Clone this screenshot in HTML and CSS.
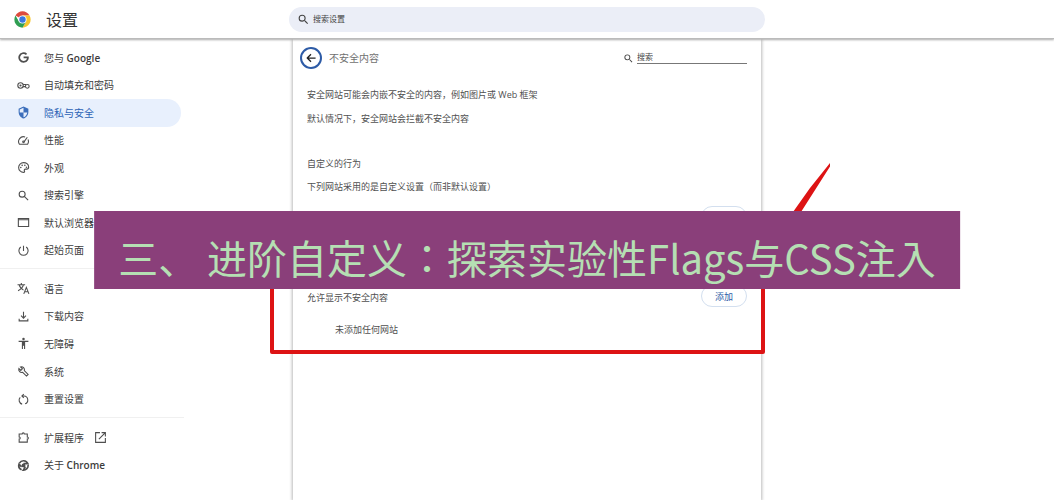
FILE: index.html
```html
<!DOCTYPE html>
<html lang="zh-CN">
<head>
<meta charset="utf-8">
<title>设置</title>
<link rel="stylesheet" href="styles.css">
</head>
<body>
<div class="page">
  <header class="topbar">
    <div class="brand">
      <svg class="logo" viewBox="0 0 48 48" aria-hidden="true">
        <path fill="#dd4b3e" d="M24 24 4.1 12.5A23 23 0 0 1 43.9 12.5H24z"/>
        <path fill="#f6c52c" d="M43.9 12.5A23 23 0 0 1 24 47L34 29.8 24 12.5z"/>
        <path fill="#2f9e52" d="M24 47A23 23 0 0 1 4.1 12.5L14 29.8 34 29.8z"/>
        <circle cx="24" cy="24" r="11.5" fill="#fff"/>
        <circle cx="24" cy="24" r="9" fill="#3b78e0"/>
      </svg>
      <h1 class="brand-title">设置</h1>
    </div>
    <label class="search">
      <svg class="icon-search" viewBox="0 0 24 24" aria-hidden="true"><path d="M15.5 14h-.79l-.28-.27A6.47 6.47 0 0 0 16 9.500 6.500 6.500 0 1 0 9.500 16c1.610 0 3.090-.59 4.230-1.570l.27.28v.79l5 4.990L20.490 19zm-6 0a4.500 4.500 0 1 1 0-9 4.500 4.500 0 0 1 0 9z"/></svg>
      <input class="search-input" type="text" placeholder="搜索设置" aria-label="搜索设置">
    </label>
  </header>

  <div class="body">
    <nav class="sidebar">
      <ul class="menu menu-main">
        <li><a class="item" href="#"><svg class="icon" viewBox="0 0 24 24"><path d="M21.500 10.300H12.200v3h6.100c-.5 3.300-3 5-6.100 5a6.400 6.400 0 1 1 4.300-11.100l2.200-2.200A9.600 9.600 0 1 0 12.200 21.600c4.900 0 9.500-3.500 9.500-9.600 0-.6-.1-1.200-.2-1.700z"/></svg>您与 <span class="latin">Google</span></a></li>
        <li><a class="item" href="#"><svg class="icon line" viewBox="0 0 24 24"><circle cx="6.500" cy="12" r="5"/><circle cx="6.500" cy="12" r="1"/><path d="M11 10h6M11 14h4"/><circle cx="19" cy="13.500" r="3.500"/></svg>自动填充和密码</a></li>
        <li><a class="item active" href="#" aria-current="page"><svg class="icon" viewBox="0 0 24 24"><path d="M12 1 3 5v6c0 5.550 3.840 10.740 9 12 5.160-1.260 9-6.450 9-12V5zm0 11h7c-.53 4.120-3.280 7.790-7 8.940V12H5V6.300l7-3.110z"/></svg>隐私与安全</a></li>
        <li><a class="item" href="#"><svg class="icon line" viewBox="0 0 24 24"><path d="M15 5.500A9 9 0 0 0 4.500 19h15a9 9 0 0 0 .8-9"/><path d="m19 6-6 8.500"/><circle cx="12" cy="14.500" r="1.500"/></svg>性能</a></li>
        <li><a class="item" href="#"><svg class="icon line" viewBox="0 0 24 24"><path d="M12 3a9 9 0 0 0 0 18c2 0 2.500-1.500 1.700-2.700-.9-1.500 0-3.300 1.800-3.300H18c2 0 3.500-1.500 3.500-4C21.500 6 17 3 12 3z"/><g class="dots"><circle cx="7" cy="12" r="1.500"/><circle cx="9.500" cy="8" r="1.500"/><circle cx="14.500" cy="8" r="1.500"/><circle cx="17.500" cy="11.500" r="1.500"/></g></svg>外观</a></li>
        <li><a class="item" href="#"><svg class="icon line" viewBox="0 0 24 24"><circle cx="9.500" cy="9.500" r="5.500"/><path d="m13.500 13.500 7 7"/></svg>搜索引擎</a></li>
        <li><a class="item" href="#"><svg class="icon line" viewBox="0 0 24 24"><path d="M2.500 4.500h19v15h-19zM2.500 7h19"/></svg>默认浏览器</a></li>
        <li><a class="item" href="#"><svg class="icon line" viewBox="0 0 24 24"><path d="M12 3v10M7 5.500a8.500 8.500 0 1 0 10 0"/></svg>起始页面</a></li>
      </ul>
      <ul class="menu menu-advanced">
        <li><a class="item" href="#"><svg class="icon line" viewBox="0 0 24 24"><path d="M1 5h14M8 2v3M4 5c1 5 4.500 8 8 10M12 5C11 10 6 14 2 16M12.500 22l4.800-12 4.700 12M14.300 18h6"/></svg>语言</a></li>
        <li><a class="item" href="#"><svg class="icon line" viewBox="0 0 24 24"><path d="M12 3v12M7.500 10.500 12 15l4.500-4.500M4 16v4h16v-4"/></svg>下载内容</a></li>
        <li><a class="item" href="#"><svg class="icon" viewBox="0 0 24 24"><circle cx="12" cy="3.500" r="2.300"/><path d="M21 9h-6v13h-2v-6h-2v6H9V9H3V7h18z"/></svg>无障碍</a></li>
        <li><a class="item" href="#"><svg class="icon line" viewBox="0 0 24 24"><path d="M6.500 3.500 10 7l-3 3-3.500-3.500A5.500 5.500 0 0 0 10.500 13.500l7 7 3-3-7-7a5.500 5.500 0 0 0-7-7z"/></svg>系统</a></li>
        <li><a class="item" href="#"><svg class="icon line" viewBox="0 0 24 24"><path d="M9.500 5.500H13a7.500 7.500 0 0 1 2 14.500M9.500 20.500A7.500 7.500 0 0 1 6 8M12.500 2 9 5.500 12.500 9"/></svg>重置设置</a></li>
      </ul>
      <ul class="menu menu-more">
        <li><a class="item" href="#"><svg class="icon line" viewBox="0 0 24 24"><path d="M4 5.500h5.500a2 2 0 0 1 4 0H19V11a2 2 0 0 1 0 4v5.500H4V15a2 2 0 0 0 0-4z"/></svg>扩展程序<svg class="icon line external" viewBox="0 0 24 24"><path d="M11 3H3v18h18v-8M14 3h7v7M21 3 9 15"/></svg></a></li>
        <li><a class="item" href="#"><svg class="icon line" viewBox="0 0 24 24"><circle cx="12" cy="12" r="3.500" class="dots"/><path class="thick" d="M4.500 7.500A8.700 8.700 0 0 1 20 8.500h-8M20.500 11A8.700 8.700 0 0 1 11.500 20.600l4-6.600M8.500 20A8.700 8.700 0 0 1 3.700 9.500l4.800 5"/></svg>关于 <span class="latin">Chrome</span></a></li>
      </ul>
    </nav>

    <main class="panel">
      <div class="panel-head">
        <button class="back" type="button" aria-label="返回"><svg viewBox="0 0 24 24"><path d="M23 12H3M12 3l-9 9 9 9"/></svg></button>
        <h2 class="panel-title">不安全内容</h2>
        <label class="find">
          <svg class="icon-search" viewBox="0 0 24 24" aria-hidden="true"><path d="M15.500 14h-.79l-.28-.27A6.470 6.470 0 0 0 16 9.500 6.500 6.500 0 1 0 9.500 16c1.610 0 3.090-.59 4.230-1.570l.27.28v.79l5 4.990L20.490 19zm-6 0a4.500 4.500 0 1 1 0-9 4.500 4.500 0 0 1 0 9z"/></svg>
          <input class="find-input" type="text" placeholder="搜索" aria-label="搜索">
        </label>
      </div>
      <div class="intro">
        <p>安全网站可能会内嵌不安全的内容，例如图片或 Web 框架</p>
        <p>默认情况下，安全网站会拦截不安全内容</p>
      </div>
      <div class="custom">
        <h3>自定义的行为</h3>
        <p>下列网站采用的是自定义设置（而非默认设置）</p>
      </div>
      <section class="sites">
        <div class="sites-head"><button class="add" type="button">添加</button></div>
      </section>
      <section class="sites">
        <div class="sites-head"><span class="sites-title">允许显示不安全内容</span><button class="add" type="button">添加</button></div>
        <p class="empty">未添加任何网站</p>
      </section>
      <div class="mark"></div>
      <svg class="pointer" viewBox="0 0 60 80" aria-hidden="true"><path d="M60 2 61 4 31 51 10 80H2L23 51 40 27z"/></svg>
    </main>
  </div>

  <div class="banner" lang="ja">三、 进阶自定义：探索实验性Flags与CSS注入</div>
</div>
</body>
</html>
```
FILE: styles.css
```css
* { box-sizing: border-box; }

body {
  margin: 0;
  background: #fff;
  color: #505050;
  font-family: "Open Sans", "Noto Sans CJK SC", sans-serif;
  font-size: 9px;
}

h1, h2, h3, p, ul { margin: 0; padding: 0; font-weight: 400; font-size: inherit; }
ul { list-style: none; }
button, input { font: inherit; }

.page {
  position: relative;
  min-height: 100vh;
  display: flex;
  flex-direction: column;
  overflow: hidden;
}

/* Top bar */
.topbar {
  position: relative;
  z-index: 1;
  height: 39px;
  display: grid;
  grid-template-columns: 1fr minmax(0, 476px) 1fr;
  align-items: center;
  background: #fff;
  border-bottom: 1px solid #bbb;
  box-shadow: 0 1px 2px #aaa;
}
.brand { display: flex; align-items: center; gap: 15px; padding-left: 14px; }
.logo { width: 17px; height: 17px; }
.brand-title { padding-top: 2px; font-size: 16px; line-height: 24px; color: #333; }
.search {
  height: 25px;
  display: flex;
  align-items: center;
  gap: 3px;
  padding: 0 8px;
  border-radius: 13px;
  background: #ebeef7;
}
.icon-search { width: 13px; height: 13px; fill: #444; flex: none; }
.search-input, .find-input {
  min-width: 0;
  flex: 1;
  border: 0;
  padding: 0;
  background: none;
  outline: 0;
  font-size: 8px;
  line-height: 12px;
}
input::placeholder { color: #444; opacity: 1; }

.body {
  flex: 1;
  display: grid;
  grid-template-columns: 1fr minmax(0, 468px) 1fr;
}

/* Sidebar */
.sidebar { width: 184px; padding-top: 5px; }
.menu { display: grid; grid-auto-rows: 1fr; }
.menu + .menu { margin-top: 4px; padding-top: 6px; border-top: 1px solid #f0f0f0; }
.menu-main { height: 220px; }
.menu-advanced { height: 145px; }
.menu-more { height: 62px; }
.item {
  height: 100%;
  margin-right: 3px;
  display: flex;
  align-items: center;
  padding-left: 17px;
  border-radius: 0 14px 14px 0;
  color: #3c3c3c;
  font-size: 10px;
  line-height: 16px;
  text-decoration: none;
  white-space: pre;
}
.latin { font-weight: 600; }
.active { background: #e8f0fd; color: #2b62b5; }
.icon { width: 13px; height: 13px; margin-right: 14px; fill: currentColor; flex: none; opacity: 0.9; }
.line { fill: none; stroke: currentColor; stroke-width: 2; }
.dots { fill: currentColor; stroke: none; }
.thick { stroke-width: 3; }
.external { margin: 0 0 0 10px; }

/* Content panel */
.panel {
  position: relative;
  padding: 1px 14px 0 14px;
  box-shadow: 0 0 3px 1px #bbb;
}
.panel-head { height: 36px; display: flex; align-items: center; margin: 0 0 7px -7px; }
.back {
  width: 22px;
  height: 22px;
  padding: 4px;
  border: 2px solid #2d5ba6;
  border-radius: 50%;
  background: #fff;
}
.back svg { display: block; width: 10px; height: 10px; fill: none; stroke: #222; stroke-width: 3; }
.panel-title { margin-left: 7px; font-size: 10px; line-height: 16px; color: #707070; }
.find { margin-left: auto; width: 124px; display: flex; align-items: center; gap: 3px; }
.find .icon-search { width: 11px; height: 11px; }
.find-input { margin-bottom: 2px; border-bottom: 1px solid #777; }
.intro { line-height: 24px; margin-bottom: 21px; }
.custom { line-height: 23px; }
.sites { min-height: 79px; }
.sites-head { height: 38px; display: flex; align-items: center; }
.sites-title { padding-top: 2px; }
.add {
  width: 46px;
  height: 22px;
  margin-left: auto;
  padding: 0;
  border: 1px solid #d3dfef;
  border-radius: 11px;
  background: #fff;
  color: #2d5ba6;
}
.empty { padding-left: 28px; line-height: 30px; }

/* Annotations drawn over the panel */
.mark {
  position: absolute;
  top: 221px;
  left: -23px;
  right: -4px;
  height: 94px;
  border: 4px solid #dd1314;
  border-radius: 2px;
}
.pointer {
  position: absolute;
  top: 122px;
  left: 477px;
  width: 60px;
  height: 80px;
  fill: #dd1314;
}

/* Caption banner */
.banner {
  position: absolute;
  z-index: 2;
  top: 211px;
  left: 50%;
  transform: translateX(-50%);
  padding: 17px 24px 3px;
  background: #8a3f7a;
  color: #b5dfb3;
  font-family: "Noto Sans CJK JP", sans-serif;
  font-size: 40px;
  font-weight: 400;
  line-height: 58px;
  white-space: nowrap;
}
```
